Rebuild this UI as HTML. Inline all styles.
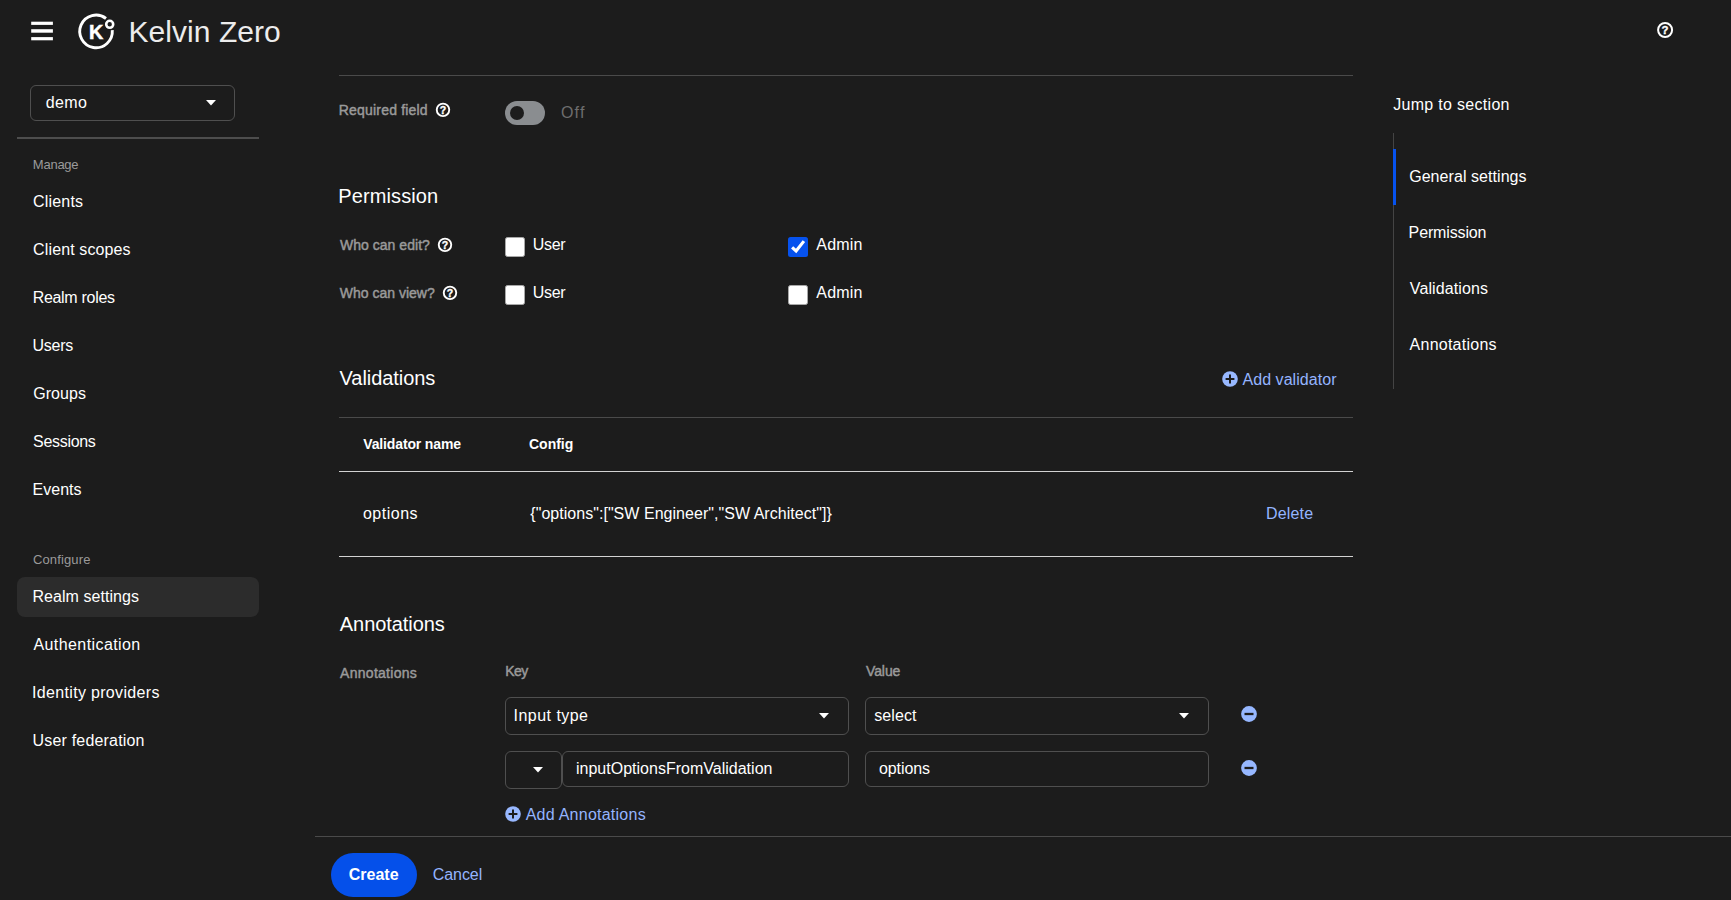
<!DOCTYPE html>
<html lang="en">
<head>
<meta charset="utf-8">
<title>Kelvin Zero</title>
<style>
*{box-sizing:border-box;margin:0;padding:0}
html,body{width:1731px;height:900px;overflow:hidden;background:#1c1c1c;color:#fff;font-family:"Liberation Sans",sans-serif;}
body{position:relative}
.t{position:absolute;white-space:nowrap;line-height:1}
.s{position:absolute}
.hr{position:absolute;height:1px;background:#4a4a4a}
.box{position:absolute;border:1px solid #4f4f4f;border-radius:6px}
.cb{width:20px;height:20px;background:#fff;border:1px solid #a8a8a8;border-radius:2.5px}
</style>
</head>
<body>
<!-- header icons -->
<svg class="s" style="left:30px;top:20px" width="24" height="22" viewBox="30 20 24 22"><rect x="31.2" y="21.7" width="21.7" height="3.2" fill="#fff"/><rect x="31.2" y="29.2" width="21.7" height="3.5" fill="#fff"/><rect x="31.2" y="37.1" width="21.7" height="3.2" fill="#fff"/></svg>
<svg class="s" style="left:70px;top:8px" width="52" height="48" viewBox="70 8 52 48">
<path d="M 106.0 18.5 A 16.3 16.3 0 1 0 112.3 30.2" fill="none" stroke="#fff" stroke-width="2.9"/>
<circle cx="109.7" cy="24.3" r="3.5" fill="none" stroke="#fff" stroke-width="2.6"/>
<text x="89" y="38.7" style="font-family:'Liberation Sans',sans-serif;font-weight:bold;font-size:19.8px" fill="#fff" stroke="#fff" stroke-width="0.5">K</text>
</svg>
<svg class="s" style="left:1655px;top:20px" width="20" height="20" viewBox="1655 20 20 20"><circle cx="1665.1" cy="30" r="7" fill="none" stroke="#fff" stroke-width="2"/><text x="1665.1" y="34.1" text-anchor="middle" style="font-family:'Liberation Sans',sans-serif;font-weight:bold;font-size:11.4px" fill="#fff" stroke="#fff" stroke-width="0.35">?</text></svg>

<!-- sidebar -->
<div class="box" style="left:30px;top:85px;width:205px;height:36px"></div>
<svg class="s" style="left:205px;top:99px" width="12" height="8" viewBox="0 0 12 8"><path d="M1 1 L11 1 L6 6.6 Z" fill="#fff"/></svg>
<div class="hr" style="left:17px;top:137px;width:242px;height:2px;background:#4d4d4d"></div>
<div class="s" style="left:17px;top:577px;width:242px;height:40px;border-radius:8px;background:#2c2c2c"></div>

<!-- main: general -->
<div class="hr" style="left:339px;top:75px;width:1014px"></div>
<svg class="s" style="left:435px;top:102px" width="16" height="16" viewBox="0 0 16 16"><circle cx="8" cy="7.85" r="6.25" fill="none" stroke="#fff" stroke-width="1.9"/><text x="8" y="11.5" text-anchor="middle" style="font-family:'Liberation Sans',sans-serif;font-weight:bold;font-size:10.5px" fill="#fff" stroke="#fff" stroke-width="0.35">?</text></svg>
<div class="s" style="left:505px;top:101px;width:40px;height:24px;border-radius:12px;background:#8a8d90"></div>
<div class="s" style="left:510px;top:106px;width:14px;height:14px;border-radius:7px;background:#1c1c1c"></div>

<!-- permission -->
<svg class="s" style="left:437px;top:237px" width="16" height="16" viewBox="0 0 16 16"><circle cx="8" cy="7.85" r="6.25" fill="none" stroke="#fff" stroke-width="1.9"/><text x="8" y="11.5" text-anchor="middle" style="font-family:'Liberation Sans',sans-serif;font-weight:bold;font-size:10.5px" fill="#fff" stroke="#fff" stroke-width="0.35">?</text></svg>
<svg class="s" style="left:442px;top:285px" width="16" height="16" viewBox="0 0 16 16"><circle cx="8" cy="7.85" r="6.25" fill="none" stroke="#fff" stroke-width="1.9"/><text x="8" y="11.5" text-anchor="middle" style="font-family:'Liberation Sans',sans-serif;font-weight:bold;font-size:10.5px" fill="#fff" stroke="#fff" stroke-width="0.35">?</text></svg>
<div class="s cb" style="left:505px;top:237px"></div>
<div class="s cb" style="left:505px;top:285px"></div>
<div class="s cb" style="left:788px;top:285px"></div>
<div class="s" style="left:788px;top:237px;width:20px;height:20px;border-radius:2.5px;background:#0652ee"></div>
<svg class="s" style="left:788px;top:237px" width="20" height="20" viewBox="788 237 20 20"><path d="M792.1 247.3 L796.1 251.0 L803.9 241.1" fill="none" stroke="#fff" stroke-width="3.1"/></svg>

<!-- validations -->
<svg class="s" style="left:1222px;top:371px" width="16" height="16" viewBox="0 0 16 16"><circle cx="8" cy="8" r="7.8" fill="#98b8ff"/><path d="M8 3.6 V12.4 M3.6 8 H12.4" stroke="#1c1c1c" stroke-width="2"/></svg>
<div class="hr" style="left:339px;top:417px;width:1014px"></div>
<div class="hr" style="left:339px;top:471px;width:1014px;background:#d2d2d2"></div>
<div class="hr" style="left:339px;top:556px;width:1014px;background:#d2d2d2"></div>

<!-- annotations -->
<div class="box" style="left:505px;top:697px;width:344px;height:38px"></div>
<svg class="s" style="left:818px;top:712px" width="12" height="8" viewBox="0 0 12 8"><path d="M1 1 L11 1 L6 6.6 Z" fill="#fff"/></svg>
<div class="box" style="left:865px;top:697px;width:344px;height:38px"></div>
<svg class="s" style="left:1178px;top:712px" width="12" height="8" viewBox="0 0 12 8"><path d="M1 1 L11 1 L6 6.6 Z" fill="#fff"/></svg>
<svg class="s" style="left:1241px;top:706px" width="16" height="16" viewBox="0 0 16 16"><circle cx="8" cy="8" r="7.9" fill="#96b7ff"/><path d="M3.5 8 H12.5" stroke="#1c1c1c" stroke-width="2.3"/></svg>
<div class="box" style="left:505px;top:751px;width:57px;height:38px"></div>
<svg class="s" style="left:532px;top:766px" width="12" height="8" viewBox="0 0 12 8"><path d="M1 1 L11 1 L6 6.6 Z" fill="#fff"/></svg>
<div class="box" style="left:562px;top:751px;width:287px;height:36px"></div>
<div class="box" style="left:865px;top:751px;width:344px;height:36px"></div>
<svg class="s" style="left:1241px;top:760px" width="16" height="16" viewBox="0 0 16 16"><circle cx="8" cy="8" r="7.9" fill="#96b7ff"/><path d="M3.5 8 H12.5" stroke="#1c1c1c" stroke-width="2.3"/></svg>
<svg class="s" style="left:505px;top:806px" width="16" height="16" viewBox="0 0 16 16"><circle cx="8" cy="8" r="7.8" fill="#98b8ff"/><path d="M8 3.6 V12.4 M3.6 8 H12.4" stroke="#1c1c1c" stroke-width="2"/></svg>

<!-- footer -->
<div class="hr" style="left:315px;top:836px;width:1416px"></div>
<div class="s" style="left:331px;top:853px;width:86px;height:44px;border-radius:22px;background:#0550ea"></div>

<!-- jump links -->
<div class="s" style="left:1393px;top:133px;width:1px;height:256px;background:#444"></div>
<div class="s" style="left:1393px;top:149px;width:3px;height:56px;background:#0652ee"></div>

<div class="t" id="brand" style="left:128.38px;top:17px;font-size:30px;color:#ececec;letter-spacing:0.068px;">Kelvin Zero</div>
<div class="t" id="demo" style="left:45.84px;top:95px;font-size:16px;color:#fff;letter-spacing:0.346px;">demo</div>
<div class="t" id="manage" style="left:32.83px;top:158px;font-size:13px;color:#9a9a9a;letter-spacing:-0.247px;">Manage</div>
<div class="t" id="n1" style="left:33.12px;top:194px;font-size:16px;color:#fff;letter-spacing:0.163px;">Clients</div>
<div class="t" id="n2" style="left:33.12px;top:242px;font-size:16px;color:#fff;letter-spacing:0.120px;">Client scopes</div>
<div class="t" id="n3" style="left:32.64px;top:290px;font-size:16px;color:#fff;letter-spacing:-0.290px;">Realm roles</div>
<div class="t" id="n4" style="left:32.56px;top:338px;font-size:16px;color:#fff;letter-spacing:-0.240px;">Users</div>
<div class="t" id="n5" style="left:33.15px;top:386px;font-size:16px;color:#fff;letter-spacing:0.057px;">Groups</div>
<div class="t" id="n6" style="left:33.01px;top:434px;font-size:16px;color:#fff;letter-spacing:-0.294px;">Sessions</div>
<div class="t" id="n7" style="left:32.61px;top:482px;font-size:16px;color:#fff;letter-spacing:-0.001px;">Events</div>
<div class="t" id="configure" style="left:32.90px;top:553px;font-size:13px;color:#9a9a9a;letter-spacing:0.144px;">Configure</div>
<div class="t" id="n8" style="left:32.39px;top:589px;font-size:16px;color:#fff;letter-spacing:0.064px;">Realm settings</div>
<div class="t" id="n9" style="left:33.48px;top:637px;font-size:16px;color:#fff;letter-spacing:0.413px;">Authentication</div>
<div class="t" id="n10" style="left:32.07px;top:685px;font-size:16px;color:#fff;letter-spacing:0.323px;">Identity providers</div>
<div class="t" id="n11" style="left:32.62px;top:733px;font-size:16px;color:#fff;letter-spacing:0.176px;">User federation</div>
<div class="t" id="req" style="left:338.80px;top:103px;font-size:14px;color:#9a9a9a;letter-spacing:0.188px;-webkit-text-stroke:0.45px #9a9a9a;">Required field</div>
<div class="t" id="off" style="left:560.98px;top:105px;font-size:16px;color:#6e6e6e;letter-spacing:1.168px;">Off</div>
<div class="t" id="hperm" style="left:338.27px;top:186px;font-size:20px;color:#fff;letter-spacing:0.116px;">Permission</div>
<div class="t" id="wedit" style="left:339.98px;top:238px;font-size:14px;color:#9a9a9a;letter-spacing:0.031px;-webkit-text-stroke:0.45px #9a9a9a;">Who can edit?</div>
<div class="t" id="wview" style="left:339.84px;top:286px;font-size:14px;color:#9a9a9a;letter-spacing:-0.006px;-webkit-text-stroke:0.45px #9a9a9a;">Who can view?</div>
<div class="t" id="u1" style="left:532.80px;top:237px;font-size:16px;color:#fff;letter-spacing:-0.318px;">User</div>
<div class="t" id="u2" style="left:532.80px;top:285px;font-size:16px;color:#fff;letter-spacing:-0.318px;">User</div>
<div class="t" id="a1" style="left:816.36px;top:237px;font-size:16px;color:#fff;letter-spacing:0.157px;">Admin</div>
<div class="t" id="a2" style="left:816.36px;top:285px;font-size:16px;color:#fff;letter-spacing:0.157px;">Admin</div>
<div class="t" id="hval" style="left:339.54px;top:368px;font-size:20px;color:#fff;letter-spacing:-0.057px;">Validations</div>
<div class="t" id="addval" style="left:1242.51px;top:372px;font-size:16px;color:#94b4ff;letter-spacing:0.047px;">Add validator</div>
<div class="t" id="thname" style="left:363.30px;top:437px;font-size:14px;color:#fff;font-weight:bold;letter-spacing:-0.147px;">Validator name</div>
<div class="t" id="thconf" style="left:528.99px;top:437px;font-size:14px;color:#fff;font-weight:bold;letter-spacing:-0.001px;">Config</div>
<div class="t" id="tdname" style="left:362.90px;top:506px;font-size:16px;color:#fff;letter-spacing:0.523px;">options</div>
<div class="t" id="tdconf" style="left:530.29px;top:506px;font-size:16px;color:#fff;letter-spacing:0.036px;">{"options":["SW Engineer","SW Architect"]}</div>
<div class="t" id="del" style="left:1265.90px;top:506px;font-size:16px;color:#94b4ff;letter-spacing:0.205px;">Delete</div>
<div class="t" id="hann" style="left:339.81px;top:614px;font-size:20px;color:#fff;letter-spacing:-0.067px;">Annotations</div>
<div class="t" id="lann" style="left:340.08px;top:666px;font-size:14px;color:#9a9a9a;letter-spacing:0.276px;-webkit-text-stroke:0.45px #9a9a9a;">Annotations</div>
<div class="t" id="key" style="left:505.16px;top:664px;font-size:14px;color:#9a9a9a;letter-spacing:-0.453px;-webkit-text-stroke:0.45px #9a9a9a;">Key</div>
<div class="t" id="value" style="left:865.95px;top:664px;font-size:14px;color:#9a9a9a;letter-spacing:-0.080px;-webkit-text-stroke:0.45px #9a9a9a;">Value</div>
<div class="t" id="itype" style="left:513.58px;top:708px;font-size:16px;color:#fff;letter-spacing:0.461px;">Input type</div>
<div class="t" id="sel" style="left:874.20px;top:708px;font-size:16px;color:#fff;letter-spacing:0.117px;">select</div>
<div class="t" id="iopt" style="left:575.94px;top:761px;font-size:16px;color:#fff;letter-spacing:0.010px;">inputOptionsFromValidation</div>
<div class="t" id="opt2" style="left:878.94px;top:761px;font-size:16px;color:#fff;letter-spacing:-0.083px;">options</div>
<div class="t" id="addann" style="left:525.68px;top:807px;font-size:16px;color:#94b4ff;letter-spacing:0.244px;">Add Annotations</div>
<div class="t" id="create" style="left:348.81px;top:867px;font-size:16px;color:#fff;font-weight:bold;letter-spacing:-0.014px;">Create</div>
<div class="t" id="cancel" style="left:432.73px;top:867px;font-size:16px;color:#94b4ff;letter-spacing:-0.065px;">Cancel</div>
<div class="t" id="jump" style="left:1393.25px;top:97px;font-size:16px;color:#fff;letter-spacing:0.298px;">Jump to section</div>
<div class="t" id="j1" style="left:1409.17px;top:169px;font-size:16px;color:#fff;letter-spacing:0.061px;">General settings</div>
<div class="t" id="j2" style="left:1408.60px;top:225px;font-size:16px;color:#fff;letter-spacing:-0.137px;">Permission</div>
<div class="t" id="j3" style="left:1409.81px;top:281px;font-size:16px;color:#fff;letter-spacing:0.102px;">Validations</div>
<div class="t" id="j4" style="left:1409.58px;top:337px;font-size:16px;color:#fff;letter-spacing:0.244px;">Annotations</div>
</body>
</html>
